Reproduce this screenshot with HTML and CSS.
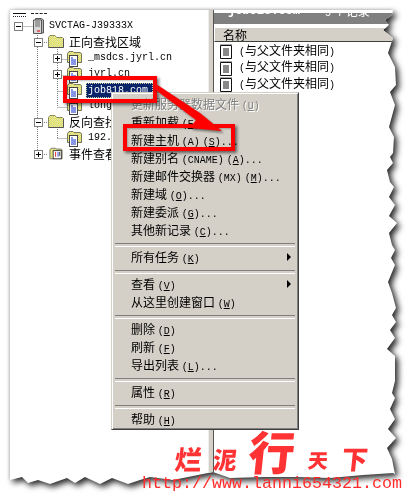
FILE: index.html
```html
<!DOCTYPE html>
<html lang="zh">
<head>
<meta charset="utf-8">
<title>DNS</title>
<link rel="stylesheet" href="styles.css">
</head>
<body>
<svg class="defs" width="0" height="0" aria-hidden="true">
  <defs>
    <pattern id="dith" width="2" height="2" patternUnits="userSpaceOnUse">
      <rect width="2" height="2" fill="#ffff66"/>
      <rect width="1" height="1" fill="#c8c8a0"/>
      <rect x="1" y="1" width="1" height="1" fill="#c8c8a0"/>
    </pattern>
    <symbol id="folder" viewBox="0 0 16 13">
      <path d="M.5 2.5 2 .5h5l1.5 2h6l1 1v9H.5z" fill="url(#dith)" stroke="#8a8a60"/>
      <path d="M.5 12.5h15v-9" fill="none" stroke="#555"/>
    </symbol>
    <symbol id="zone" viewBox="0 0 15 17">
      <path d="M.5 3.5 2 1.5h4l1 1h6l1.5 1v9H.5z" fill="url(#dith)" stroke="#77775a"/>
      <rect x="2.5" y="5.5" width="8" height="11" fill="#fff" stroke="#444"/>
      <path d="M4 8h2M4 10h5M4 12h5M4 14h5" stroke="#1030d0"/>
    </symbol>
    <symbol id="server" viewBox="0 0 11 16">
      <path d="M2.5.5h6l2 1.5v13h-8z" fill="#b8b8b8" stroke="#555"/>
      <path d="M.5 2h8v13.5h-8z" fill="#d8d8d8" stroke="#555"/>
      <path d="M2 4h5M2 6h5M2 8h5" stroke="#666"/>
      <path d="M4 13h3" stroke="#e00000"/>
    </symbol>
    <symbol id="event" viewBox="0 0 16 16">
      <path d="M.5 3.5 2 1.5h5l1 1h6l1.5 1v11H.5z" fill="url(#dith)" stroke="#666"/>
      <rect x="4.5" y="4.5" width="10" height="10" fill="#fff" stroke="#222"/>
      <path d="M7.5 6v6" stroke="#e00000"/><path d="M10.500 6v6" stroke="#1030d0"/><path d="M12.500 6v5" stroke="#222"/>
    </symbol>
    <symbol id="record" viewBox="0 0 12 16">
      <path d="M.5 2.500h11v13H.5z" fill="#fff" stroke="#111"/>
      <path d="M1 1v1M3 1v1M5 1v1M7 1v1M9 1v1M11 1v1" stroke="#555"/>
      <path d="M3 6h6M3 8h6M3 10h6M3 12h6" stroke="#111"/>
    </symbol>
  </defs>
</svg>

<div class="stage">
  <div class="torn">
    <div class="window">
      <section class="tree">
        <svg class="lines" width="198" height="160" viewBox="10 10 198 160" aria-hidden="true">
          <path d="M23.500 26.500h10M37.500 33v117M42 42.500h6M57.500 47v60M57.500 59.500h10M57.500 75.500h10M57.500 91.500h10M57.500 107.500h10M42 122.500h6M57.500 127v12M57.500 138.500h10M42 154.500h6" fill="none" stroke="#808080" stroke-dasharray="1 1"/>
        </svg>
        <div class="stub"><span class="stub-a"></span><span class="stub-b"></span></div>
        <div class="row l0"><i class="exp minus"></i><svg class="ico-s"><use href="#server"/></svg><span class="label m">SVCTAG-J39333X</span></div>
        <div class="row l1"><i class="exp minus"></i><svg class="ico-f"><use href="#folder"/></svg><span class="label">正向查找区域</span></div>
        <div class="row l2"><i class="exp plus"></i><svg class="ico-z"><use href="#zone"/></svg><span class="label m">_msdcs.jyrl.cn</span></div>
        <div class="row l2"><i class="exp plus"></i><svg class="ico-z"><use href="#zone"/></svg><span class="label m">jyrl.cn</span></div>
        <div class="row l2"><i class="exp none"></i><svg class="ico-z"><use href="#zone"/></svg><span class="label m selected">job818.com</span></div>
        <div class="row l2"><i class="exp none"></i><svg class="ico-z"><use href="#zone"/></svg><span class="label m">long.cn</span></div>
        <div class="row l1"><i class="exp minus"></i><svg class="ico-f"><use href="#folder"/></svg><span class="label">反向查找区域</span></div>
        <div class="row l2"><i class="exp none"></i><svg class="ico-z"><use href="#zone"/></svg><span class="label m">192.168.1.x</span></div>
        <div class="row l1"><i class="exp plus"></i><svg class="ico-f"><use href="#event"/></svg><span class="label">事件查看器</span></div>
      </section>
      <div class="splitter"></div>
      <section class="detail">
        <div class="titlebar"><span class="m t1">job818.com</span><span class="t2"><span class="m">5</span> 个记录</span></div>
        <div class="header">名称</div>
        <div class="rec"><svg class="ico-r"><use href="#record"/></svg><span><span class="m">(</span>与父文件夹相同<span class="m">)</span></span></div>
        <div class="rec"><svg class="ico-r"><use href="#record"/></svg><span><span class="m">(</span>与父文件夹相同<span class="m">)</span></span></div>
        <div class="rec"><svg class="ico-r"><use href="#record"/></svg><span><span class="m">(</span>与父文件夹相同<span class="m">)</span></span></div>
      </section>

      <nav class="menu">
        <div class="item off">更新服务器数据文件 <span class="m">(<u>U</u>)</span></div>
        <div class="item">重新加载 <span class="m">(<u>E</u>)</span></div>
        <div class="item">新建主机 <span class="m">(A) (<u>S</u>)...</span></div>
        <div class="item">新建别名 <span class="m">(CNAME) (<u>A</u>)...</span></div>
        <div class="item">新建邮件交换器 <span class="m">(MX) (<u>M</u>)...</span></div>
        <div class="item">新建域 <span class="m">(<u>O</u>)...</span></div>
        <div class="item">新建委派 <span class="m">(<u>G</u>)...</span></div>
        <div class="item">其他新记录 <span class="m">(<u>C</u>)...</span></div>
        <div class="sep"></div>
        <div class="item sub">所有任务 <span class="m">(<u>K</u>)</span></div>
        <div class="sep"></div>
        <div class="item sub">查看 <span class="m">(<u>V</u>)</span></div>
        <div class="item">从这里创建窗口 <span class="m">(<u>W</u>)</span></div>
        <div class="sep"></div>
        <div class="item">删除 <span class="m">(<u>D</u>)</span></div>
        <div class="item">刷新 <span class="m">(<u>F</u>)</span></div>
        <div class="item">导出列表 <span class="m">(<u>L</u>)...</span></div>
        <div class="sep"></div>
        <div class="item">属性 <span class="m">(<u>R</u>)</span></div>
        <div class="sep"></div>
        <div class="item">帮助 <span class="m">(<u>H</u>)</span></div>
      </nav>
    </div>
  </div>

  <div class="callout box-a"></div>
  <div class="callout box-b"></div>
  <svg class="arrow" width="413" height="501" viewBox="0 0 413 501" aria-hidden="true">
    <path d="M156 84 200 113 222 131 190 128 196 120 153 88z" fill="#ff0000"/>
  </svg>

  <div class="brand">
    <span class="b1">烂</span><span class="b2">泥</span><span class="b3">行</span><span class="b4">天</span><span class="b5">下</span>
  </div>
  <div class="url">http://www.lanni654321.com</div>
</div>
</body>
</html>
```
FILE: styles.css
```css
* { box-sizing: border-box; }
html, body { margin: 0; padding: 0; background: #fff; }
body {
  width: 413px;
  height: 501px;
  overflow: hidden;
  font-family: "Noto Sans CJK SC", sans-serif;
  font-size: 12px;
  color: #000;
}
.defs { position: absolute; }
.m { font-family: "Liberation Mono", monospace; font-size: 10px; }
.item .m { word-spacing: -3px; }

.stage { position: relative; width: 413px; height: 501px; overflow: hidden; }
.torn { filter: drop-shadow(3px 3px 3px rgba(0, 0, 0, .85)) drop-shadow(-1px -1px 1px rgba(0, 0, 0, .12)); }

.window {
  position: relative;
  width: 413px;
  height: 501px;
  padding: 10px 0 0 10px;
  display: flex;
  background: #fff;
  clip-path: polygon(10px 10px, 393px 10px, 392px 15px, 385px 20px, 389px 25px, 383px 30px, 393px 38px, 388px 53px, 395px 67px, 396px 85px, 390px 92px, 395px 105px, 389px 127px, 394px 137px, 393px 153px, 390px 157px, 393px 163px, 387px 170px, 390px 182px, 394px 187px, 389px 197px, 395px 205px, 389px 216px, 397px 223px, 389px 233px, 392px 245px, 395px 250px, 391px 258px, 395px 265px, 388px 282px, 392px 293px, 396px 308px, 392px 315px, 396px 322px, 390px 330px, 395px 338px, 387px 349px, 395px 356px, 395px 381px, 392px 393px, 395px 398px, 390px 409px, 395px 419px, 388px 429px, 396px 438px, 387px 448px, 392px 459px, 395px 474px, 393px 473px, 363px 475px, 330px 478px, 297px 477px, 263px 477px, 230px 478px, 213px 472px, 173px 480px, 150px 477px, 140px 480px, 128px 484px, 112px 478px, 100px 484px, 85px 477px, 75px 483px, 67px 478px, 50px 484px, 38px 480px, 28px 483px, 22px 477px, 10px 480px);
}

/* tree */
.tree { position: relative; width: 198px; flex: none; padding-top: 8px; }
.lines { position: absolute; left: 0; top: 0; }
.stub { position: absolute; left: 0; top: 0; width: 60px; height: 8px; }
.stub-a { position: absolute; left: 3px; top: 3px; width: 13px; height: 4px; border-top: 1px solid #111; border-bottom: 1px dotted #223; }
.stub-b { position: absolute; left: 21px; top: 3px; width: 16px; height: 1px; border-top: 1px dashed #222; }
.row { position: relative; display: flex; align-items: center; height: 16px; white-space: nowrap; line-height: 16px; }
.l0 { padding-left: 4px; }
.l1 { padding-left: 24px; }
.l2 { padding-left: 43px; }
.exp { position: relative; display: block; flex: none; width: 9px; height: 9px; border: 1px solid #808080; background: #fff; margin-top: 1px; }
.exp.none { border: 0; background: transparent; }
.exp.minus::before, .exp.plus::before { content: ""; position: absolute; left: 1px; top: 3px; width: 5px; height: 1px; background: #000; }
.exp.plus::after { content: ""; position: absolute; left: 3px; top: 1px; width: 1px; height: 5px; background: #000; }
.ico-s { flex: none; width: 11px; height: 16px; margin-left: 10px; }
.ico-f { flex: none; width: 16px; height: 13px; margin-left: 5px; margin-top: -2px; }
.ico-z { flex: none; width: 15px; height: 17px; margin-left: 5px; }
.label { margin-left: 5px; }
.l0 .label { margin-left: 5px; }
.l2 .label { margin-left: 4px; padding: 0 2px; }
.selected { background: #0a246a; color: #fff; outline: 1px dotted #d4d0a0; outline-offset: -1px; height: 15px; line-height: 15px; width: 67px; }

/* splitter */
.splitter { flex: none; width: 6px; height: 463px; background: #d4d0c8; border-left: 1px solid #eee; border-right: 1px solid #555; }

/* detail */
.detail { flex: 1; min-width: 0; padding-top: 3px; }
.titlebar { position: relative; height: 11px; background: #808080; color: #fff; overflow: hidden; font-weight: bold; }
.t1 { position: absolute; left: 14px; top: -8px; font-size: 12px; line-height: 12px; }
.t2 { position: absolute; left: 111px; top: -9px; line-height: 14px; font-weight: normal; }
.header { height: 15px; margin-top: 3px; padding-left: 8px; line-height: 13px; background: #d4d0c8; border-top: 1px solid #fff; border-bottom: 1px solid #404040; border-left: 1px solid #fff; }
.rec { display: flex; align-items: center; height: 16.500px; padding-left: 6px; white-space: nowrap; line-height: 16px; }
.header + .rec { margin-top: 1px; }
.ico-r { flex: none; width: 12px; height: 16px; margin-right: 7px; }

/* context menu */
.menu {
  position: absolute;
  left: 111px;
  top: 92px;
  width: 188px;
  height: 338px;
  padding: 2px 3px;
  background: #d4d0c8;
  border: 1px solid;
  border-color: #d4d0c8 #404040 #404040 #d4d0c8;
  box-shadow: inset 1px 1px #fff, inset -1px -1px #808080;
}
.item { position: relative; height: 18px; line-height: 18px; padding-left: 16px; white-space: nowrap; }
.off { color: #808080; text-shadow: 1px 1px 0 #fff; }
.sub::after { content: ""; position: absolute; left: 172px; top: 5px; border-left: 4px solid #000; border-top: 4px solid transparent; border-bottom: 4px solid transparent; }
.sep { height: 9px; padding-top: 4px; }
.sep::before { content: ""; display: block; height: 2px; border-top: 1px solid #808080; border-bottom: 1px solid #fff; }

/* annotations */
.callout { position: absolute; border: 4px solid #ff0000; box-shadow: 2px 2px 3px rgba(0, 0, 0, .55), inset 1px 1px 2px rgba(0, 0, 0, .25); }
.box-a { left: 63px; top: 76px; width: 94px; height: 27px; }
.box-b { left: 123px; top: 124px; width: 112px; height: 27px; }
.arrow { position: absolute; left: 0; top: 0; filter: drop-shadow(2px 2px 1px rgba(0, 0, 0, .45)); }

.brand { position: absolute; left: 175px; top: 424px; height: 50px; width: 200px; display: flex; align-items: flex-end; color: #ff3333; font-weight: 900; line-height: 1; }
.brand span { display: block; transform: skewX(-6deg); }
.b1 { font-size: 27px; margin-bottom: 2px; }
.b2 { font-size: 24px; margin: 0 0 3px 11px; }
.b3 { font-size: 46px; margin: 0 0 1px 12px; }
.b4 { font-size: 20px; margin: 0 0 4px 13px; }
.b5 { font-size: 26px; margin: 0 0 3px 14px; }
.url { position: absolute; left: 142px; top: 474px; font-family: "Liberation Mono", monospace; font-size: 16.670px; line-height: 19px; color: #ff2b2b; white-space: nowrap; }
```
